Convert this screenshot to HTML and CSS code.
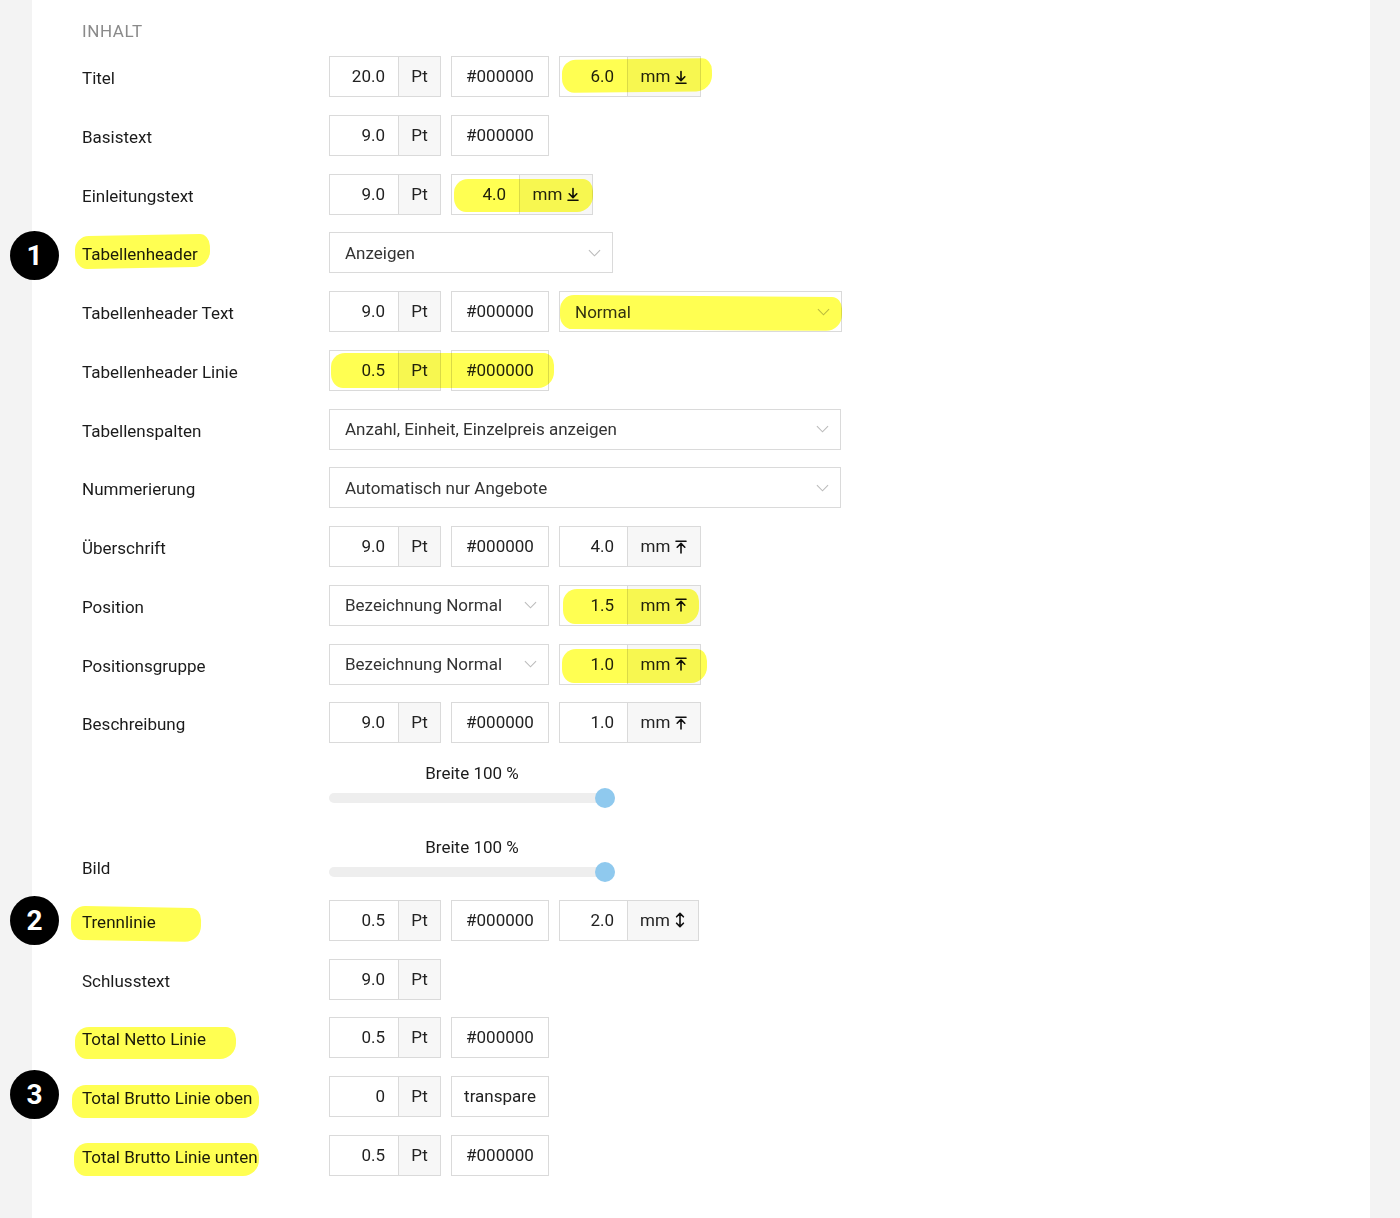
FILE: index.html
```html
<!DOCTYPE html>
<html lang="de">
<head>
<meta charset="utf-8">
<title>Inhalt</title>
<link rel="stylesheet" href="styles.css">
</head>
<body>
<div class="page">
  <main class="panel">
    <div class="section-title">INHALT</div>
    <div class="form">
      <div class="row">
        <div class="label">Titel</div>
        <div class="controls">
          <div class="group"><div class="num">20.0</div><div class="unit">Pt</div></div>
          <div class="color">#000000</div>
          <div class="group mm"><div class="num">6.0</div><div class="unit">mm <svg class="ic" viewBox="0 0 12 14"><path d="M6 1.5v9M2.2 6.8L6 10.6l3.8-3.8M1 13.2h10"/></svg></div></div>
        </div>
      </div>
      <div class="row">
        <div class="label">Basistext</div>
        <div class="controls">
          <div class="group"><div class="num">9.0</div><div class="unit">Pt</div></div>
          <div class="color">#000000</div>
        </div>
      </div>
      <div class="row">
        <div class="label">Einleitungstext</div>
        <div class="controls">
          <div class="group"><div class="num">9.0</div><div class="unit">Pt</div></div>
          <div class="group mm"><div class="num">4.0</div><div class="unit">mm <svg class="ic" viewBox="0 0 12 14"><path d="M6 1.5v9M2.2 6.8L6 10.6l3.8-3.8M1 13.2h10"/></svg></div></div>
        </div>
      </div>
      <div class="row">
        <div class="label">Tabellenheader</div>
        <div class="controls">
          <div class="select w284">Anzeigen<svg class="chev" viewBox="0 0 14 8"><path d="M1 1l6 6 6-6"/></svg></div>
        </div>
      </div>
      <div class="row">
        <div class="label">Tabellenheader Text</div>
        <div class="controls">
          <div class="group"><div class="num">9.0</div><div class="unit">Pt</div></div>
          <div class="color">#000000</div>
          <div class="select w283">Normal<svg class="chev" viewBox="0 0 14 8"><path d="M1 1l6 6 6-6"/></svg></div>
        </div>
      </div>
      <div class="row">
        <div class="label">Tabellenheader Linie</div>
        <div class="controls">
          <div class="group"><div class="num">0.5</div><div class="unit">Pt</div></div>
          <div class="color">#000000</div>
        </div>
      </div>
      <div class="row">
        <div class="label">Tabellenspalten</div>
        <div class="controls">
          <div class="select w512">Anzahl, Einheit, Einzelpreis anzeigen<svg class="chev" viewBox="0 0 14 8"><path d="M1 1l6 6 6-6"/></svg></div>
        </div>
      </div>
      <div class="row">
        <div class="label">Nummerierung</div>
        <div class="controls">
          <div class="select w512">Automatisch nur Angebote<svg class="chev" viewBox="0 0 14 8"><path d="M1 1l6 6 6-6"/></svg></div>
        </div>
      </div>
      <div class="row">
        <div class="label">Überschrift</div>
        <div class="controls">
          <div class="group"><div class="num">9.0</div><div class="unit">Pt</div></div>
          <div class="color">#000000</div>
          <div class="group mm"><div class="num">4.0</div><div class="unit">mm <svg class="ic" viewBox="0 0 12 14"><path d="M1 1.2h10M6 13V3.6M2.2 7.2L6 3.4l3.8 3.8"/></svg></div></div>
        </div>
      </div>
      <div class="row">
        <div class="label">Position</div>
        <div class="controls">
          <div class="select w220">Bezeichnung Normal<svg class="chev" viewBox="0 0 14 8"><path d="M1 1l6 6 6-6"/></svg></div>
          <div class="group mm"><div class="num">1.5</div><div class="unit">mm <svg class="ic" viewBox="0 0 12 14"><path d="M1 1.2h10M6 13V3.6M2.2 7.2L6 3.4l3.8 3.8"/></svg></div></div>
        </div>
      </div>
      <div class="row">
        <div class="label">Positionsgruppe</div>
        <div class="controls">
          <div class="select w220">Bezeichnung Normal<svg class="chev" viewBox="0 0 14 8"><path d="M1 1l6 6 6-6"/></svg></div>
          <div class="group mm"><div class="num">1.0</div><div class="unit">mm <svg class="ic" viewBox="0 0 12 14"><path d="M1 1.2h10M6 13V3.6M2.2 7.2L6 3.4l3.8 3.8"/></svg></div></div>
        </div>
      </div>
      <div class="row">
        <div class="label">Beschreibung</div>
        <div class="controls">
          <div class="group"><div class="num">9.0</div><div class="unit">Pt</div></div>
          <div class="color">#000000</div>
          <div class="group mm"><div class="num">1.0</div><div class="unit">mm <svg class="ic" viewBox="0 0 12 14"><path d="M1 1.2h10M6 13V3.6M2.2 7.2L6 3.4l3.8 3.8"/></svg></div></div>
        </div>
      </div>
      <div class="slider-row first">
        <div class="label"></div>
        <div class="slider">
          <div class="slider-label">Breite 100 %</div>
          <div class="track"><span class="thumb"></span></div>
        </div>
      </div>
      <div class="slider-row second">
        <div class="label bild">Bild</div>
        <div class="slider">
          <div class="slider-label">Breite 100 %</div>
          <div class="track"><span class="thumb"></span></div>
        </div>
      </div>
      <div class="row after-slider">
        <div class="label">Trennlinie</div>
        <div class="controls">
          <div class="group"><div class="num">0.5</div><div class="unit">Pt</div></div>
          <div class="color">#000000</div>
          <div class="group mm narrow"><div class="num">2.0</div><div class="unit">mm <svg class="ic" viewBox="0 0 12 16"><path d="M6 1.5v13M2.6 4.8L6 1.4l3.4 3.4M2.6 11.2L6 14.6l3.4-3.4"/></svg></div></div>
        </div>
      </div>
      <div class="row">
        <div class="label">Schlusstext</div>
        <div class="controls">
          <div class="group"><div class="num">9.0</div><div class="unit">Pt</div></div>
        </div>
      </div>
      <div class="row">
        <div class="label">Total Netto Linie</div>
        <div class="controls">
          <div class="group"><div class="num">0.5</div><div class="unit">Pt</div></div>
          <div class="color">#000000</div>
        </div>
      </div>
      <div class="row">
        <div class="label">Total Brutto Linie oben</div>
        <div class="controls">
          <div class="group"><div class="num">0</div><div class="unit">Pt</div></div>
          <div class="color">transpare</div>
        </div>
      </div>
      <div class="row">
        <div class="label">Total Brutto Linie unten</div>
        <div class="controls">
          <div class="group"><div class="num">0.5</div><div class="unit">Pt</div></div>
          <div class="color">#000000</div>
        </div>
      </div>
    </div>
  </main>

  <div class="marks">
    <span class="hl h1"></span>
    <span class="hl h2"></span>
    <span class="hl h3"></span>
    <span class="hl h4"></span>
    <span class="hl h5"></span>
    <span class="hl h6"></span>
    <span class="hl h7"></span>
    <span class="hl h8"></span>
    <span class="hl h9"></span>
    <span class="hl h10"></span>
    <span class="hl h11"></span>
    <span class="badge b1">1</span>
    <span class="badge b2">2</span>
    <span class="badge b3">3</span>
  </div>
</div>
</body>
</html>
```

FILE: styles.css
```css
html, body {
  margin: 0;
  padding: 0;
}
body {
  background: #f3f3f3;
  font-family: Roboto, "Liberation Sans", Arial, sans-serif;
  color: #1b1b1b;
  font-size: 17px;
}
.page {
  position: relative;
  width: 1400px;
  height: 1218px;
  overflow: hidden;
}
.panel {
  margin-left: 32px;
  width: 1338px;
  height: 1218px;
  background: #fff;
  box-sizing: border-box;
  padding: 21px 0 0 50px;
}
.section-title {
  color: #8a8a8a;
  letter-spacing: 0.6px;
  line-height: 20px;
  height: 20px;
  margin-bottom: 15px;
}
.form {
  display: flex;
  flex-direction: column;
  gap: 17.77px;
}
.row {
  display: flex;
  align-items: center;
  height: 41px;
}
.label {
  width: 247px;
  flex: none;
  line-height: 20px;
  padding-top: 3px;
  color: #1b1b1b;
}
.controls {
  display: flex;
  gap: 10px;
  height: 41px;
}
.group {
  display: flex;
  border: 1px solid #dadada;
  height: 41px;
  box-sizing: border-box;
  color: #222;
}
.num {
  width: 68px;
  box-sizing: border-box;
  text-align: right;
  padding-right: 13px;
  line-height: 39px;
}
.unit {
  width: 42px;
  box-sizing: border-box;
  border-left: 1px solid #dadada;
  background: #f7f7f7;
  text-align: center;
  line-height: 39px;
  display: flex;
  align-items: center;
  justify-content: center;
}
.mm .num {
  width: 67px;
}
.mm .unit {
  width: 73px;
}
.mm.narrow .unit {
  width: 71px;
}
.ic {
  width: 12px;
  height: 14px;
  margin-left: 5px;
  fill: none;
  stroke: #111;
  stroke-width: 1.6;
  stroke-linecap: round;
  stroke-linejoin: round;
}
.narrow .ic {
  height: 16px;
  margin-left: 4px;
}
.color {
  width: 98px;
  height: 41px;
  box-sizing: border-box;
  border: 1px solid #dadada;
  text-align: center;
  line-height: 39px;
  color: #222;
}
.select {
  height: 41px;
  box-sizing: border-box;
  border: 1px solid #dadada;
  padding: 0 11px 0 15px;
  display: flex;
  align-items: center;
  justify-content: space-between;
  color: #333;
}
.w284 { width: 284px; }
.w283 { width: 283px; }
.w512 { width: 512px; }
.w220 { width: 220px; }
.chev {
  width: 13px;
  height: 8px;
  fill: none;
  stroke: #bcbcbc;
  stroke-width: 1.2;
}
.slider-row {
  display: flex;
  align-items: flex-end;
}
.slider-row.first {
  margin-top: 1.7px;
}
.slider-row.second {
  margin-top: 16.2px;
}
.label.bild {
  margin-bottom: -1px;
  padding-top: 0;
}
.slider {
  width: 286px;
}
.slider-label {
  text-align: center;
  line-height: 20px;
  color: #1b1b1b;
  margin-bottom: 10px;
}
.track {
  position: relative;
  height: 10px;
  border-radius: 5px;
  background: #eeeeee;
}
.thumb {
  position: absolute;
  right: 0;
  top: -5px;
  width: 20px;
  height: 20px;
  border-radius: 50%;
  background: #8fc9ee;
}
.row.after-slider {
  margin-top: 5.2px;
}

/* annotation layer */
.marks {
  position: absolute;
  left: 0;
  top: 0;
  width: 1400px;
  height: 1218px;
  pointer-events: none;
}
.hl {
  position: absolute;
  background: #ffff52;
  mix-blend-mode: multiply;
  border-radius: 14px 10px 16px 12px / 14px 12px 16px 14px;
}
.h1 { left: 562px; top: 59px; width: 150px; height: 33px; transform: rotate(-0.6deg); }
.h2 { left: 454px; top: 179px; width: 139px; height: 33px; }
.h3 { left: 75px; top: 235px; width: 135px; height: 33px; transform: rotate(-1deg); }
.h4 { left: 560px; top: 296px; width: 282px; height: 34px; transform: rotate(0.4deg); }
.h5 { left: 331px; top: 353px; width: 223px; height: 35px; }
.h6 { left: 563px; top: 589px; width: 136px; height: 35px; }
.h7 { left: 562px; top: 649px; width: 145px; height: 34px; }
.h8 { left: 71px; top: 907px; width: 130px; height: 34px; transform: rotate(1deg); }
.h9 { left: 75px; top: 1027px; width: 161px; height: 32px; }
.h10 { left: 72px; top: 1085px; width: 187px; height: 33px; }
.h11 { left: 74px; top: 1143px; width: 185px; height: 33px; }
.badge {
  position: absolute;
  width: 49px;
  height: 49px;
  border-radius: 50%;
  background: #000;
  color: #fff;
  font-weight: 700;
  font-size: 28px;
  line-height: 49px;
  text-align: center;
}
.b1 { left: 10px; top: 231px; }
.b2 { left: 10px; top: 896px; }
.b3 { left: 10px; top: 1070px; }
```
